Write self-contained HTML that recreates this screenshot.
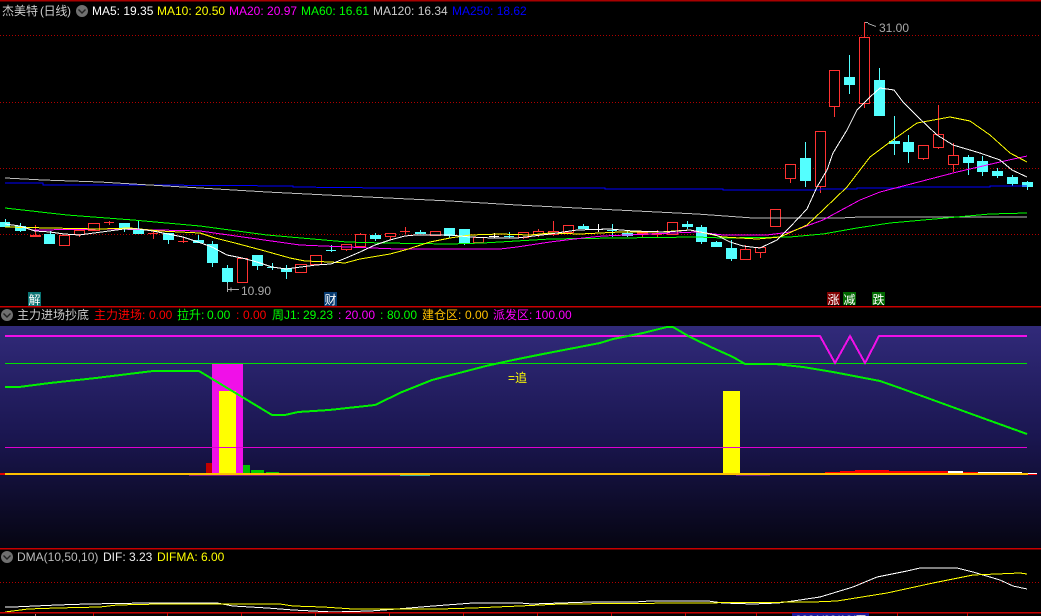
<!DOCTYPE html>
<html lang="zh"><head><meta charset="utf-8"><title>杰美特</title>
<style>
html,body{margin:0;padding:0;background:#000;width:1041px;height:616px;overflow:hidden}
svg{display:block}
text{font-family:"Liberation Sans","WenQuanYi Zen Hei","Noto Sans CJK SC",sans-serif;font-size:12px}
.l{fill:none;stroke-width:1;shape-rendering:crispEdges}
</style></head><body>
<svg width="1041" height="616" viewBox="0 0 1041 616" xmlns="http://www.w3.org/2000/svg">
<defs><linearGradient id="g" x1="0" y1="0" x2="0" y2="1"><stop offset="0" stop-color="#312a7a"/><stop offset=".5" stop-color="#1a1650"/><stop offset="1" stop-color="#060512"/></linearGradient></defs>
<rect width="1041" height="616" fill="#000"/>
<rect y="0" width="1041" height="1.5" fill="#a80000"/>
<g stroke="#b00000" stroke-dasharray="1 2" shape-rendering="crispEdges">
<path d="M0 35.5H1041M0 102.5H1041M0 168.5H1041M0 234.5H1041M0 582.5H1041"/></g>

<!-- candles -->
<g fill="#000" stroke="#ff3232" shape-rendering="crispEdges">
<path d="M59.5 235.5h10v10h-10zM74.5 230.5h10v4h-10zM88.5 223.5h11v7h-11zM310.5 255.5h11v9h-11zM295.5 264.5h11v8h-11zM237.5 258.5h10v24h-10zM341.5 244.5h10v5h-10zM355.5 234.5h10v12h-10zM385.5 233.5h10v3h-10zM430.5 231.5h10v4h-10zM473.5 237.5h10v5h-10zM518.5 232.5h10v5h-10zM533.5 231.5h10v3h-10zM548.5 231.5h10v3h-10zM563.5 225.5h10v7h-10zM667.5 222.5h10v12h-10zM740.5 249.5h10v10h-10zM755.5 247.5h10v5h-10zM770.5 209.5h10v17h-10zM785.5 164.5h10v14h-10zM815.5 131.5h10v55h-10zM829.5 70.5h10v36h-10zM859.5 37.5h10v66h-10zM918.5 145.5h10v13h-10zM933.5 134.5h10v13h-10zM948.5 155.5h10v9h-10z"/>
<path fill="none" d="M79.5 234V237M346.5 249V251M360.5 233V234M360.5 246V248M390.5 236V240M523.5 237V239M538.5 229V231M538.5 234V237M553.5 221V231M553.5 234V236M745.5 245V249M760.5 252V258M790.5 178V183M820.5 186V193M834.5 106V117M864.5 22V37M864.5 103V108M923.5 158V160M938.5 105V134M938.5 147V149M953.5 143V155M953.5 164V172M35.5 225V235M109.5 221V225M153.5 230V239M183.5 237V243M405.5 227V234M642.5 235V238M657.5 230V237M30 236.5H41M104 222.5H114M148 233.5H158M178 241.5H188M400 231.5H410"/>
</g>
<g fill="#ff3232" shape-rendering="crispEdges"><rect x="30" y="235" width="11" height="2"/><rect x="637" y="232" width="11" height="3"/><rect x="652" y="233" width="10" height="2"/></g>
<g fill="#54ffff" shape-rendering="crispEdges">
<rect x="0" y="222" width="10" height="5"/><rect x="15" y="226" width="11" height="5"/><rect x="44" y="234" width="11" height="10"/><rect x="119" y="223" width="11" height="6"/><rect x="133" y="230" width="11" height="4"/><rect x="163" y="233" width="11" height="7"/><rect x="193" y="240" width="11" height="3"/><rect x="207" y="244" width="11" height="19"/><rect x="222" y="268" width="11" height="14"/><rect x="252" y="255" width="11" height="11"/><rect x="281" y="268" width="11" height="4"/><rect x="370" y="235" width="11" height="4"/><rect x="415" y="232" width="11" height="2"/><rect x="444" y="228" width="11" height="8"/><rect x="459" y="229" width="11" height="14"/><rect x="578" y="226" width="11" height="3"/><rect x="622" y="233" width="11" height="3"/><rect x="682" y="224" width="11" height="3"/><rect x="696" y="227" width="11" height="15"/><rect x="711" y="242" width="11" height="5"/><rect x="726" y="248" width="11" height="11"/><rect x="800" y="158" width="11" height="23"/><rect x="844" y="77" width="11" height="8"/><rect x="874" y="80" width="11" height="36"/><rect x="889" y="141" width="11" height="3"/><rect x="903" y="142" width="11" height="10"/><rect x="963" y="157" width="11" height="6"/><rect x="977" y="161" width="11" height="11"/><rect x="992" y="171" width="11" height="5"/><rect x="1007" y="177" width="11" height="7"/><rect x="1022" y="182" width="11" height="5"/>
</g>
<path class="l" stroke="#54ffff" d="M5.5 219V222M20.5 223V232M50.5 231V234M124.5 229V232M138.5 221V230M168.5 240V244M198.5 235V240M212.5 241V267M227.5 265V289M257.5 266V270M267 267.5H277M272.5 263V270M286.5 265V279M326 250.5H336M331.5 245V252M375.5 233V241M420.5 230V232M449.5 236V238M464.5 243V245M504 236.5H514M509.5 232V238M583.5 224V226M607 230.5H617M612.5 224V237M627.5 231V237M687.5 221V229M701.5 225V244M716.5 241V242M731.5 240V261M805.5 142V187M849.5 55V94M879.5 68V80M894.5 116V155M908.5 135V163M968.5 155V175M982.5 156V176M997.5 168V178M1012.5 175V186M1027.5 181V190"/>
<path class="l" stroke="#fff" d="M494.5 233V238M489 236.5H499M598.5 224V232M593 229.5H603"/>

<!-- MA lines -->
<polyline class="l" stroke="#0000ff" points="5,183 43,183 43,185 147,185 293,186 293,187 385,188 605,188 605,189 723,189 723,190 820,190 820,189 857,189 857,188 900,188 900,187 990,187 990,186 1027,186"/>
<polyline class="l" stroke="#bbb" points="5,178 43,180 100,182 133,184 200,188 267,192 347,196 450,201 517,205 617,210 697,214 753,218 840,218 860,217 1027,217"/>
<polyline class="l" stroke="#00ff00" points="5,208 67,215 133,220 200,226 267,235 347,242 383,243 450,244 483,243 550,239 617,238 697,237 723,238 790,237 823,234 857,228 890,223 957,217 990,214 1027,213"/>
<polyline class="l" stroke="#ff00ff" points="33,230 117,229 200,231 250,238 300,245 347,247 397,249 500,249 517,247 550,242 583,238 603,236 650,234 697,232 723,235 767,235 790,232 823,220 860,200 880,192 907,185 957,172 1000,162 1027,156"/>
<polyline class="l" stroke="#ffff00" points="5,227 50,228 100,229 130,228 160,231 200,233 215,238 235,243 265,251 290,258 305,261 330,262 345,263 360,259 390,254 405,250 430,242 450,238 470,235 500,234 530,235 550,233 580,234 600,233 620,232 660,232 690,230 723,237 757,239 780,237 807,225 823,210 847,187 860,170 870,157 890,142 917,123 950,117 970,121 990,135 1010,153 1027,162"/>
<polyline class="l" stroke="#fff" points="5,224 20,226 35,231 50,232 64,234 79,235 94,233 109,231 124,229 138,229 153,231 168,234 183,237 198,242 212,247 227,255 242,258 257,262 272,267 286,269 301,267 316,265 331,264 346,258 360,252 375,245 390,240 405,236 416,235 450,235 470,237 493,238 517,238 550,234 577,230 610,229 633,231 667,232 690,230 716,235 730,242 743,246 760,248 777,240 790,227 807,209 817,187 827,170 833,153 847,130 857,110 870,97 880,88 894,90 903,102 917,116 937,135 953,145 980,153 1000,160 1012,170 1027,177"/>

<!-- price labels -->
<path class="l" stroke="#aaa" d="M227.5 283V292M228 289.5H239M231 287.5v4M865 22.5h3M868 23.5l8 3"/>
<text x="241" y="295" fill="#aaa">10.90</text>
<text x="879" y="32" fill="#aaa">31.00</text>

<!-- tags -->
<rect x="28" y="292" width="13" height="14" fill="#087272"/><text x="28.5" y="304" fill="#fff">解</text>
<rect x="324" y="292" width="13" height="14" fill="#063a70"/><text x="324.5" y="304" fill="#fff">财</text>
<rect x="827" y="292" width="13" height="13" fill="#800000"/><text x="827.5" y="304" fill="#fff">涨</text>
<rect x="843" y="292" width="13" height="13" fill="#006800"/><text x="843.5" y="304" fill="#fff">减</text>
<rect x="872" y="292" width="13" height="13" fill="#006800"/><text x="872.5" y="304" fill="#fff">跌</text>

<!-- top header -->
<text x="2" y="15" fill="#ccc">杰美特</text><text x="40" y="15" fill="#ccc" textLength="31">(日线)</text>
<circle cx="82" cy="11" r="6" fill="#707070"/><path d="M78.5 9.5L82 13L85.5 9.5" fill="none" stroke="#222" stroke-width="1.4"/>
<text x="92" y="15" fill="#fff">MA5: 19.35</text>
<text x="157" y="15" fill="#ff0">MA10: 20.50</text>
<text x="229" y="15" fill="#f0f">MA20: 20.97</text>
<text x="301" y="15" fill="#0f0">MA60: 16.61</text>
<text x="373" y="15" fill="#ccc">MA120: 16.34</text>
<text x="452" y="15" fill="#0000ff">MA250: 18.62</text>

<!-- panel 2 -->
<rect y="306" width="1041" height="1.5" fill="#c80000"/>
<rect y="326" width="1041" height="222" fill="url(#g)"/>
<circle cx="7" cy="315" r="6" fill="#707070"/><path d="M3.5 313.5L7 317L10.5 313.5" fill="none" stroke="#222" stroke-width="1.4"/>
<text x="17" y="319" fill="#ccc">主力进场抄底</text>
<text x="94" y="319" fill="#f00">主力进场:</text><text x="149" y="319" fill="#f00">0.00</text>
<text x="177" y="319" fill="#0f0">拉升:</text><text x="207" y="319" fill="#0f0">0.00</text>
<text x="236" y="319" fill="#f00">:</text><text x="243" y="319" fill="#f00">0.00</text>
<text x="272" y="319" fill="#0f0">周J1:</text><text x="303" y="319" fill="#0f0">29.23</text>
<text x="338" y="319" fill="#f0f">:</text><text x="345" y="319" fill="#f0f">20.00</text>
<text x="380" y="319" fill="#0f0">:</text><text x="387" y="319" fill="#0f0">80.00</text>
<text x="422" y="319" fill="#ffc000">建仓区:</text><text x="465" y="319" fill="#ffc000">0.00</text>
<text x="493" y="319" fill="#f0f">派发区:</text><text x="535" y="319" fill="#f0f">100.00</text>

<g shape-rendering="crispEdges">
<rect x="212" y="363" width="31" height="111" fill="#f010e8"/>
<rect x="219" y="391" width="17" height="83" fill="#ff0"/>
<rect x="723" y="391" width="17" height="83" fill="#ff0"/>
<rect x="206" y="463" width="6" height="11" fill="#c00000"/>
<rect x="243" y="465" width="7" height="9" fill="#00c000"/>
<rect x="251" y="470" width="13" height="4" fill="#00d000"/>
<rect x="266" y="472" width="13" height="2" fill="#00d000"/>
<rect x="825" y="472" width="15" height="2" fill="#f00"/>
<rect x="840" y="471" width="15" height="3" fill="#f00"/>
<rect x="855" y="470" width="34" height="4" fill="#f00"/>
<rect x="889" y="471" width="59" height="3" fill="#f00"/>
<rect x="948" y="471" width="15" height="3" fill="#fff"/>
<rect x="963" y="472" width="15" height="2" fill="#f00"/>
<rect x="978" y="472" width="44" height="2" fill="#fff"/>
<rect x="1028" y="473" width="9" height="1" fill="#fff"/>
<rect x="1028" y="474" width="9" height="1" fill="#f00"/>
<rect x="189" y="475" width="211" height="1" fill="#7a1a7a"/>
<rect x="400" y="475" width="30" height="1" fill="#40b0a0"/>
<rect x="736" y="475" width="34" height="1" fill="#601a80"/>
<rect x="0" y="473" width="5" height="2" fill="#e00000"/>
<path class="l" stroke="#00e000" d="M5 363.5H1027"/>
<path class="l" stroke="#e000d0" d="M5 447.5H1027"/>
<rect x="5" y="473" width="1023" height="2" fill="#ffc000"/>
</g>
<polyline fill="none" stroke="#f010e8" stroke-width="2" shape-rendering="crispEdges" points="5,336 820,336 835,363 850,336 865,363 879,336 1027,336"/>
<polyline fill="none" stroke="#00f000" stroke-width="2" shape-rendering="crispEdges" points="5,387 19,387 50,383 96,378 153,371 199,371 272,415 285,415 298,412 329,410 375,405 402,392 432,380 486,366 513,360 543,354 600,343 613,339 643,333 667,327 673,327 690,337 713,348 733,357 745,364 775,364 803,367 833,372 880,381 900,388 933,400 977,416 1027,434"/>
<text x="508" y="382" fill="#ff0">=追</text>

<!-- panel 3 -->
<rect y="548" width="1041" height="1.5" fill="#c80000"/>
<circle cx="7" cy="557" r="6" fill="#707070"/><path d="M3.5 555.5L7 559L10.5 555.5" fill="none" stroke="#222" stroke-width="1.4"/>
<text x="17" y="561" fill="#bbb">DMA(10,50,10)</text>
<text x="103" y="561" fill="#eee">DIF: 3.23</text>
<text x="157" y="561" fill="#ff0">DIFMA: 6.00</text>
<polyline class="l" stroke="#fff" points="5,607 13,607 57,605 87,604 147,603 217,603 233,606 267,608 293,610 333,612 370,611 397,609 433,606 473,603 520,603 532,604 590,602 635,602 650,601 708,601 723,603 753,604 778,603 793,601 820,597 853,587 877,577 907,571 920,568 957,568 973,572 1000,580 1013,586 1027,589"/>
<polyline class="l" stroke="#ff0" points="5,612 28,609 57,608 100,607 117,605 160,604 280,604 293,606 323,607 353,609 400,609 440,609 473,608 520,606 560,604 813,602 837,601 887,593 933,583 973,575 1020,573 1027,574"/>
<rect y="612" width="1041" height="1.5" fill="#c80000"/>
<path class="l" stroke="#c80000" d="M93.5 613V616M167.5 613V616M241.5 613V616M315.5 613V616M389.5 613V616M463.5 613V616M537.5 613V616M611.5 613V616M685.5 613V616M756.5 613V616M897.5 613V616M967.5 613V616"/>
<path class="l" stroke="#c08080" d="M35.5 614V616"/>
<rect x="792" y="613" width="77" height="3" fill="#1a1a9a"/>
<text x="795" y="624" fill="#ddd" textLength="72">2021/09/10/五</text>
</svg>
</body></html>
